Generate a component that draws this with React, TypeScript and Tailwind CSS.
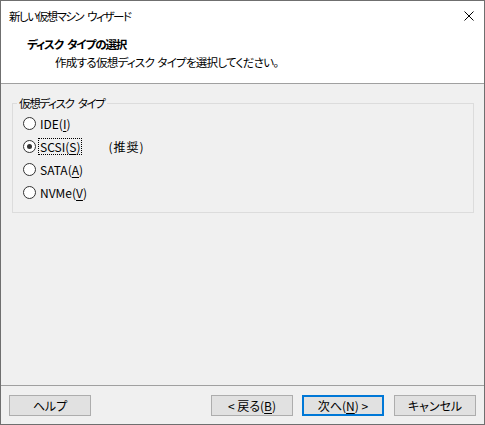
import React from "react";

const font = { fontFamily: '"Noto Sans CJK JP", "Noto Sans", sans-serif' };

function Radio({ label, mnemonicIndex, checked, focused, extra }: { label: string; mnemonicIndex: number; checked?: boolean; focused?: boolean; extra?: string }) {
  const before = label.slice(0, mnemonicIndex);
  const key = label.slice(mnemonicIndex, mnemonicIndex + 1);
  const after = label.slice(mnemonicIndex + 1);
  return (
    <div className="flex items-center h-[23px] pl-[10px]">
      <span className="w-[13px] h-[13px] rounded-full border border-[#333333] bg-white flex items-center justify-center">
        {checked && <span className="w-[5px] h-[5px] rounded-full bg-[#333333]" />}
      </span>
      <span className={"ml-[3px] px-[1px] leading-[15px] " + (focused ? "outline outline-1 outline-dotted outline-black" : "")}>
        {before}
        <span className="underline underline-offset-2">{key}</span>
        {after}
      </span>
      {extra && <span className="ml-[27px] tracking-[1px]">{extra}</span>}
    </div>
  );
}

function Button({ children, primary }: { children: React.ReactNode; primary?: boolean }) {
  return (
    <button
      className={
        "w-[82px] h-[21px] bg-[#e1e1e1] text-[12px] leading-none flex items-center justify-center " +
        (primary ? "border-2 border-[#0078d7]" : "border border-[#adadad]")
      }
    >
      {children}
    </button>
  );
}

export default function App() {
  return (
    <div
      className="w-[485px] h-[425px] border border-[#6f6f6f] flex flex-col text-[12px] text-black bg-[#f0f0f0] overflow-hidden [font-feature-settings:'palt']"
      style={font}
    >
      {/* title bar */}
      <div className="h-[29px] bg-white flex items-center justify-between pl-[8px] pr-[9px]">
        <span className="leading-[16px] text-[11.5px] tracking-[-1.5px]">
          <span className="mr-[4px]">新しい仮想マシン</span>ウィザード
        </span>
        <svg width="10" height="10" viewBox="0 0 10 10" className="mr-[1px]">
          <path d="M0.5 0.5L9.5 9.5M9.5 0.5L0.5 9.5" stroke="#000" strokeWidth="1" />
        </svg>
      </div>
      {/* header */}
      <div className="h-[53px] bg-white pt-[6px] pl-[26px]">
        <div className="font-bold leading-[16px] text-[11.5px] tracking-[-1.1px]">
          <span className="mr-[4px]">ディスク</span>タイプの選択
        </div>
        <div className="leading-[16px] mt-[2px] pl-[28px] text-[11.5px] tracking-[-0.7px]">
          <span className="mr-[3px]">作成する仮想ディスク</span>タイプを選択してください。
        </div>
      </div>
      <div className="h-px bg-[#a0a0a0]" />
      {/* body */}
      <div className="h-[301px] pt-[11px] pl-[11px] pr-[10px]">
        <fieldset className="border border-[#dcdcdc] pb-[8px]">
          <legend className="ml-[4px] px-[2px] leading-[16px] text-[11.5px] tracking-[-1.3px]">
            <span className="mr-[4px]">仮想ディスク</span>タイプ
          </legend>
          <div className="pt-[1px]">
            <Radio label="IDE(I)" mnemonicIndex={4} />
            <Radio label="SCSI(S)" mnemonicIndex={5} checked focused extra="(推奨)" />
            <Radio label="SATA(A)" mnemonicIndex={5} />
            <Radio label="NVMe(V)" mnemonicIndex={5} />
          </div>
        </fieldset>
      </div>
      <div className="h-px bg-[#a0a0a0]" />
      {/* footer */}
      <div className="h-[38px] flex items-start pt-[9px] pl-[8px] pr-[8px]">
        <Button>ヘルプ</Button>
        <div className="flex-1" />
        <Button>
          &lt; 戻る(<span className="underline underline-offset-2">B</span>)
        </Button>
        <div className="ml-[9px]">
          <Button primary>
            次へ(<span className="underline underline-offset-2">N</span>) &gt;
          </Button>
        </div>
        <div className="ml-[10px]">
          <Button>キャンセル</Button>
        </div>
      </div>
    </div>
  );
}
